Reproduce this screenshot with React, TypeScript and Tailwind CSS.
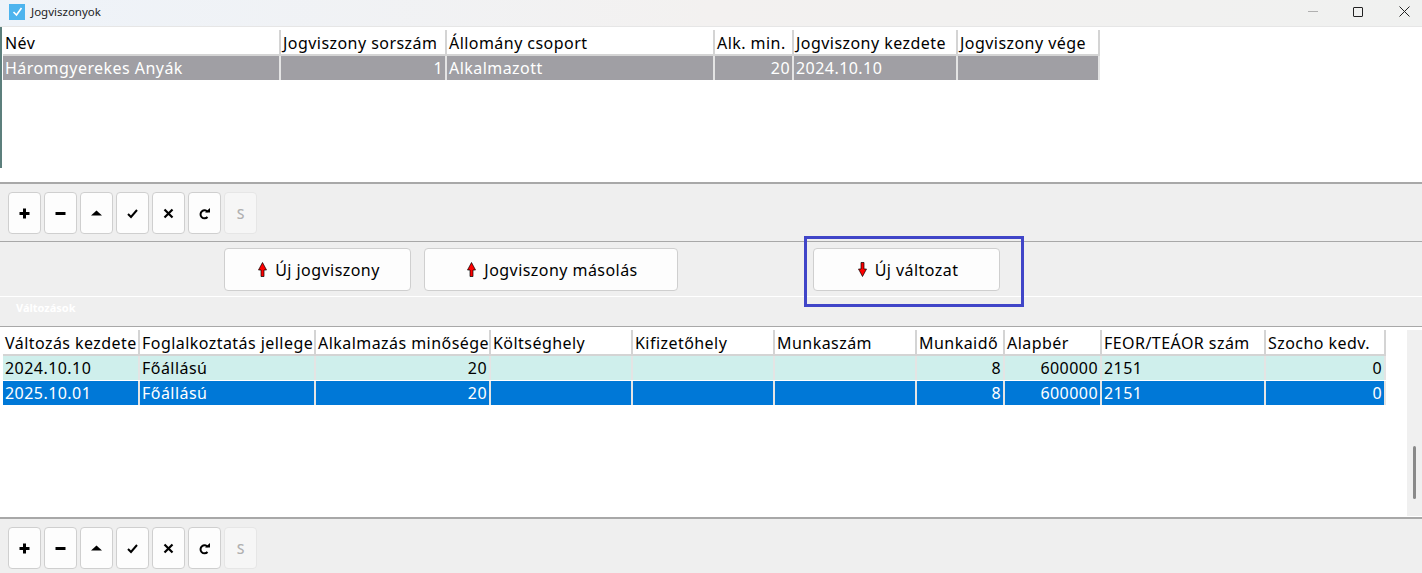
import React from 'react';

interface Col {
  title: string;
  width: number;
  right?: boolean;
}

const jogviszonyCols: Col[] = [
  { title: 'Név', width: 278 },
  { title: 'Jogviszony sorszám', width: 166, right: true },
  { title: 'Állomány csoport', width: 268 },
  { title: 'Alk. min.', width: 79, right: true },
  { title: 'Jogviszony kezdete', width: 164 },
  { title: 'Jogviszony vége', width: 142 },
];

const valtozasCols: Col[] = [
  { title: 'Változás kezdete', width: 137 },
  { title: 'Foglalkoztatás jellege', width: 176 },
  { title: 'Alkalmazás minősége', width: 175, right: true },
  { title: 'Költséghely', width: 142 },
  { title: 'Kifizetőhely', width: 142 },
  { title: 'Munkaszám', width: 142 },
  { title: 'Munkaidő', width: 88, right: true },
  { title: 'Alapbér', width: 97, right: true },
  { title: 'FEOR/TEÁOR szám', width: 164 },
  { title: 'Szocho kedv.', width: 120, right: true },
];

const Grid = ({ cols, rows }: { cols: Col[]; rows: { cells: string[]; cls: string }[] }) => (
  <div className="w-fit">
    <div className="flex h-[26px] border-b-2 border-[#d4d4d4]">
      {cols.map((c) => (
        <div
          key={c.title}
          style={{ width: c.width }}
          className="shrink-0 border-r-2 border-[#d4d4d4] pl-[2px] leading-[27px] whitespace-nowrap overflow-hidden text-black"
        >
          {c.title}
        </div>
      ))}
    </div>
    {rows.map((r, i) => (
      <div key={i} className={`flex h-[25px] border-b border-white ${r.cls}`}>
        {cols.map((c, j) => (
          <div
            key={c.title}
            style={{ width: c.width }}
            className={`shrink-0 border-r-2 border-[#e4e4e4] leading-[24px] whitespace-nowrap overflow-hidden ${c.right ? 'pr-[2px] text-right' : 'pl-[2px]'}`}
          >
            {r.cells[j]}
          </div>
        ))}
      </div>
    ))}
  </div>
);

const icons: React.ReactNode[] = [
  <path d="M5 1.500h3v3.500h3.500v3H8v3.500H5V8H1.500V5H5z" fill="#000" />,
  <path d="M1.500 5h10v3h-10z" fill="#000" />,
  <path d="M6.500 3.500l5.500 5H1z" fill="#000" />,
  <path d="M2 7l3 3 6-7" fill="none" stroke="#000" strokeWidth="2" />,
  <path d="M2.500 2.500l8 8M10.500 2.500l-8 8" fill="none" stroke="#000" strokeWidth="2.200" />,
  <>
    <path d="M9.800 5A4 4 0 1 0 9.500 10" fill="none" stroke="#000" strokeWidth="2" />
    <path d="M7 5.500h5V1z" fill="#000" />
  </>,
];

const Toolbar = ({ cls }: { cls: string }) => (
  <div className={`flex gap-[3px] bg-[#efefef] pl-2 pt-2 ${cls}`}>
    {icons.map((icon, i) => (
      <button
        key={i}
        className="flex h-[42px] w-[33px] items-center justify-center rounded-[4px] border border-[#cfcfcf] bg-[#fdfdfd]"
      >
        <svg width="13" height="13" viewBox="0 0 13 13">
          {icon}
        </svg>
      </button>
    ))}
    <button className="flex h-[42px] w-[33px] items-center justify-center rounded-[4px] border border-[#e6e6e6] bg-[#f6f6f6] text-[14px] font-medium tracking-normal text-[#b0b0b0]">
      S
    </button>
  </div>
);

const Arrow = ({ down }: { down?: boolean }) => (
  <svg width="9" height="15" viewBox="0 0 9 15" className={down ? 'rotate-180' : ''}>
    <path d="M4.500.5L8.500 8H6v6.500H3V8H.5z" fill="#ff0000" stroke="#000" strokeWidth="0.700" />
  </svg>
);

const BigButton = ({ label, down, cls }: { label: string; down?: boolean; cls: string }) => (
  <button
    className={`flex h-[43px] items-center justify-center gap-[8px] rounded-[4px] border border-[#cfcfcf] bg-[#fdfdfd] pl-[3px] text-black ${cls}`}
  >
    <Arrow down={down} />
    {label}
  </button>
);

export default function App() {
  return (
    <div className="relative flex h-[573px] w-[1422px] flex-col overflow-hidden bg-white font-['Noto_Sans',sans-serif] text-[16px] tracking-[0.45px] text-black">
      {/* címsor */}
      <div className="flex h-[27px] items-center bg-gradient-to-r from-[#eef3f9] via-[#f3f1f0] to-[#f0f1f0] pl-[9px] pb-[3px] border-b border-[#e6e6e6]">
        <div className="flex h-[16px] w-[16px] items-center justify-center bg-[#4db4ee]">
          <svg width="11" height="10" viewBox="0 0 11 10">
            <path d="M1.500 5l3 3 5-7" fill="none" stroke="#fff" strokeWidth="1.600" />
          </svg>
        </div>
        <span className="ml-[6px] text-[11.500px] tracking-normal text-[#222]">Jogviszonyok</span>
        <div className="ml-auto flex items-center">
          <div className="h-px w-[10px] bg-[#b0b0b0]" />
          <div className="ml-[35px] h-[10px] w-[10px] rounded-[1px] border border-[#222]" />
          <svg width="11" height="11" viewBox="0 0 11 11" className="ml-[36px] mr-[12px]">
            <path d="M.5.500l10 10M10.500.5l-10 10" stroke="#222" strokeWidth="1" />
          </svg>
        </div>
      </div>

      {/* jogviszonyok */}
      <div className="relative h-[155px] pl-[3px] pt-[3px]">
        <div className="absolute left-0 top-0 h-[141px] w-[2px] bg-[#5c7f7c]" />
        <Grid
          cols={jogviszonyCols}
          rows={[
            {
              cells: ['Háromgyerekes Anyák', '1', 'Alkalmazott', '20', '2024.10.10', ''],
              cls: 'bg-[#a09fa4] text-white',
            },
          ]}
        />
      </div>
      <div className="h-[2px] bg-[#a8a8a8]" />
      <Toolbar cls="h-[57px]" />
      <div className="h-px bg-[#a8a8a8]" />

      {/* gombok */}
      <div className="flex h-[55px] bg-[#efefef] pl-[224px] pt-[6px] border-b border-white">
        <BigButton label="Új jogviszony" cls="w-[187px]" />
        <BigButton label="Jogviszony másolás" cls="ml-[13px] w-[254px]" />
        <BigButton label="Új változat" down cls="ml-[135px] w-[187px]" />
      </div>
      <div className="h-[29px] bg-[#efefef] pl-[16px] pt-[3px] text-[11px] font-bold tracking-normal leading-[16px] text-white">
        Változások
      </div>
      <div className="h-px bg-[#a8a8a8]" />

      {/* változások */}
      <div className="relative h-[190px] pl-[3px] pt-[3px]">
        <Grid
          cols={valtozasCols}
          rows={[
            {
              cells: ['2024.10.10', 'Főállású', '20', '', '', '', '8', '600000', '2151', '0'],
              cls: 'bg-[#cfefec] text-black',
            },
            {
              cells: ['2025.10.01', 'Főállású', '20', '', '', '', '8', '600000', '2151', '0'],
              cls: 'bg-[#0078d7] text-white',
            },
          ]}
        />
        <div className="absolute right-0 top-[3px] bottom-[1px] flex w-[15px] justify-center bg-[#f0f0f0]">
          <div className="mt-[116px] h-[53px] w-[3px] rounded-sm bg-[#8a8a8a]" />
        </div>
      </div>
      <div className="h-[2px] bg-[#a8a8a8]" />
      <Toolbar cls="h-[54px]" />

      {/* kiemelés */}
      <div className="absolute left-[804px] top-[236px] h-[71px] w-[220px] border-[3px] border-[#4045c8]" />
    </div>
  );
}
